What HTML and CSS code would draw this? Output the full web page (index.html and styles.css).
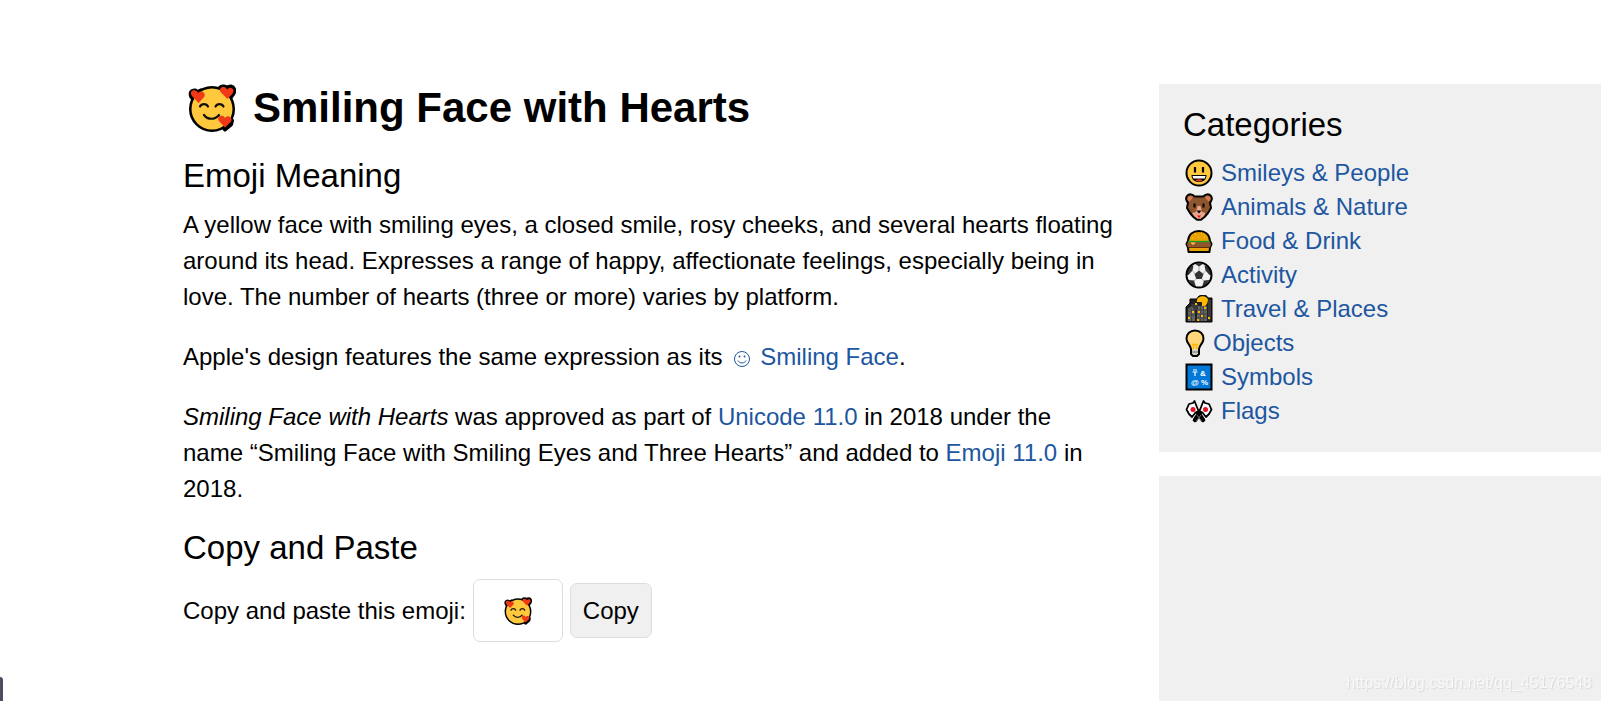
FILE: index.html
```html
<!doctype html>
<html lang="en">
<head>
  <meta charset="utf-8">
  <meta name="viewport" content="width=device-width">
  <title>Smiling Face with Hearts</title>
  <link rel="stylesheet" href="styles.css">
</head>
<body>
<svg class="sprite" aria-hidden="true">
  <symbol id="hearts-face" viewBox="0 0 48 48">
    <g fill="#000" stroke="#000" stroke-width="4" stroke-linejoin="round">
      <circle cx="24" cy="25" r="21"/>
      <path d="M10 19.500L3.500 13C1.500 9 3.500 6 7 6.500c1 .3 2 1.300 3 2 1-1.200 2-2 4-2.500"/>
      <path d="M40 17L32 8C30 4 33 2 36 2.500c1.500.3 2.500 1 3 1.500 1-1.200 2-1.500 4-1.500 3 .5 4 3.500 2.500 7z"/>
      <path d="M37 45.500l-5-6 12-3-1 4z"/>
    </g>
    <circle cx="24" cy="25" r="20.500" fill="#ffc83d"/>
    <g fill="#f03a17">
      <path d="M10.500 19l-6.500-7C1.500 8.500 4 5.500 7 6.500c1.500.3 2.700 1.300 3.300 2.500 1-1.400 2.500-1.800 4-1.300 2.700.8 3 3.800 1.700 5.500z"/>
      <path d="M39.500 15L33 8.500C30.500 5 33 2.500 36 3c1.500.3 2.700 1.300 3.300 2.500C40.300 4 42 3.500 43.300 4 46 4.800 46 7.500 44.500 9.500z"/>
      <path d="M37 43.500l-6-6.500c-2-3.300.5-5.700 3-5.200 1.500.3 2.500 1.200 3 2.300 1-1.500 2.500-2 4-1.600 3 .9 3 3.700 1.700 5.500z"/>
    </g>
    <path d="M12 22.500c1.500-3.300 6.500-3.300 8 0M27.500 22.500c1.500-3.300 6.500-3.300 8 0M16 31c3.500 5 11 5 15 0" fill="none" stroke="#111" stroke-width="2.200" stroke-linecap="round"/>
  </symbol>
</svg>

<div class="page">
  <main class="content">
    <h1><svg class="title-emoji" aria-hidden="true"><use href="#hearts-face"/></svg>Smiling Face with Hearts</h1>

    <h2>Emoji Meaning</h2>
    <p>A yellow face with smiling eyes, a closed smile, rosy cheeks, and several hearts floating around its head. Expresses a range of happy, affectionate feelings, especially being in love. The number of hearts (three or more) varies by platform.</p>
    <p>Apple's design features the same expression as its
      <a href="#"><svg class="inline-emoji" viewBox="0 0 18 18" aria-hidden="true"><circle cx="9" cy="9" r="7.500" fill="none" stroke="currentColor"/><path d="M5 10.500c1.500 3.300 6.500 3.300 8 0" fill="none" stroke="currentColor"/><circle cx="6.500" cy="6.500" r="1" fill="currentColor"/><circle cx="11.500" cy="6.500" r="1" fill="currentColor"/></svg>Smiling Face</a>.</p>
    <p><em>Smiling Face with Hearts</em> was approved as part of <a href="#">Unicode 11.0</a> in 2018 under the name “Smiling Face with Smiling Eyes and Three Hearts” and added to <a href="#">Emoji 11.0</a> in 2018.</p>

    <h2>Copy and Paste</h2>
    <form class="copy-form">
      <label for="emoji-copy">Copy and paste this emoji:</label>
      <span class="copy-field">
        <input id="emoji-copy" type="text" readonly>
        <svg aria-hidden="true"><use href="#hearts-face"/></svg>
      </span>
      <button type="button">Copy</button>
    </form>
  </main>

  <aside class="sidebar">
    <nav class="block">
      <h2>Categories</h2>
      <ul>
        <li><a href="#">
          <svg class="icon" viewBox="0 0 28 28" aria-hidden="true">
            <circle cx="14" cy="14" r="12.500" fill="#ffc83d" stroke="#000" stroke-width="2"/>
            <path d="M10 8v5.500M18 8v5.500" stroke="#000" stroke-width="2.200"/>
            <path d="M6.500 16h15c0 4.500-3 7-7.500 7s-7.500-2.500-7.500-7z" fill="#000"/>
            <path d="M7.500 17h13l-.8 2.500H8.300z" fill="#fff"/>
            <path d="M10.500 21.500c2-1.800 5-1.800 7 0-2 1.300-5 1.300-7 0z" fill="#f03a17"/>
          </svg>Smileys &amp; People</a></li>
        <li><a href="#">
          <svg class="icon" viewBox="0 0 28 28" aria-hidden="true">
            <path d="M2 3c2-2.500 6-2 7.500.5h9C20 1 24 .5 26 3c1.500 2 .8 5-1 6.500l1 5.500-3 5-3.500 4-3.500 2.700h-4L8.500 24 5 20l-3-5 1-5.500C1 8 .5 5 2 3z" fill="#8e562e" stroke="#000" stroke-width="2" stroke-linejoin="round"/>
            <path d="M3 4c2-2 4.500-1 5 .5L4.500 8.500C2.500 7.500 2 5.500 3 4zM25 4c-2-2-4.500-1-5 .5l3.500 4C25.500 7.500 26 5.500 25 4z" fill="#d67d50"/>
            <path d="M12.500 13h3l1.500 6 3.500 1-1.500 3-3.500 2.700h-3L9 23l-2-3 4-1z" fill="#e9a58c"/>
            <path d="M9.500 10.500v4M18.500 10.500v4" stroke="#000" stroke-width="2"/>
            <path d="M11.500 17.500h5L14 20.500z" fill="#000"/>
            <path d="M12 22.500h4L14 25z" fill="#e81224"/>
          </svg>Animals &amp; Nature</a></li>
        <li><a href="#">
          <svg class="icon" viewBox="0 0 28 28" aria-hidden="true">
            <path d="M3 14C3.500 7.500 8 4 14 4s10.500 3.500 11 10l1.500 3-1.500 3.500-.5 4.500h-21L3 20.500 1.500 17z" fill="#e8a200" stroke="#000" stroke-width="2" stroke-linejoin="round"/>
            <path d="M3 15h22l1 2-1 3.500H3l-1-3.500z" fill="#8e562e"/>
            <path d="M3 14.500h22" stroke="#16a020" stroke-width="1.300"/>
            <path d="M5 15.500h6l-3 2.500z" fill="#ffc83d"/>
            <path d="M4 20.500h20" stroke="#5f2d0b"/>
            <path d="M10 7h1M16 6h1M13 10h1M19 10h1M7 11h1" stroke="#ffd56d"/>
          </svg>Food &amp; Drink</a></li>
        <li><a href="#">
          <svg class="icon" viewBox="0 0 28 28" aria-hidden="true">
            <circle cx="14" cy="14" r="12.500" fill="#f2f2f2"/>
            <path d="M14 9.500l4.500 3.500-1.700 5h-5.600l-1.700-5zM9.500 2.500h9L14 5.500zM2 10l3-4.500 3.500-1-1 5L3.500 14H1.500zM26 10l-3-4.500-3.500-1 1 5 4 4.500h2zM3.500 19l5.500.5L11 26l-4-2zM24.500 19l-5.500.5L17 26l4-2z" fill="#333"/>
            <path d="M14 5v5M7.500 9.500l2.500 3.500M20.500 9.500L18 13M11.200 18L9 20M16.800 18l2.200 2" stroke="#aaa"/>
            <circle cx="14" cy="14" r="12.500" fill="none" stroke="#000" stroke-width="2"/>
          </svg>Activity</a></li>
        <li><a href="#">
          <svg class="icon" viewBox="0 0 28 28" aria-hidden="true">
            <path d="M1 27V12l4-4V4h7c1-5 10-5 11-1h4v24z" fill="#222" stroke="#000" stroke-width="1"/>
            <path d="M12 5c1-5 10-5 11 0-.5 3-1.500 5-3 6h-3V7h-5z" fill="#ffb900"/>
            <path d="M3 26V14l4-3 3 3v12zM12 26V11h10v15z" fill="#636363"/>
            <path d="M6 9h7v6H9zM23 5h3v20h-3z" fill="#393939"/>
            <path d="M3 16h7M3 20h7M12 15h10M12 19h10M12 23h10M6.500 13v13M15.500 11v15M18.500 11v15" stroke="#444"/>
            <path d="M10 8h2v2h-2zM7 16h2v2H7zM3 22h2v2H3zM13 16h2v2h-2zM19 12h2v2h-2zM16 20h2v2h-2zM23 22h2v2h-2zM12 24h2v2h-2z" fill="#ffb900"/>
          </svg>Travel &amp; Places</a></li>
        <li><a href="#">
          <svg class="icon icon--narrow" viewBox="0 0 20 28" aria-hidden="true">
            <path d="M10 1.500c5 0 8.500 3.500 8.500 8.200 0 4.300-4 6-4.500 10.300v5l-2 2H8l-2-2v-5C5.500 15.700 1.500 14 1.500 9.700 1.500 5 5 1.500 10 1.500z" fill="#ffd679" stroke="#000" stroke-width="2"/>
            <path d="M7 15.500h6M8.500 15.500V20M11.500 15.500V20" fill="none" stroke="#ffb900" stroke-width="1.500"/>
            <path d="M7 20.500h6v3.500l-2 2H9l-2-2z" fill="#ccc"/>
            <path d="M7 23h6" stroke="#777"/>
          </svg>Objects</a></li>
        <li><a href="#">
          <svg class="icon" viewBox="0 0 28 28" aria-hidden="true">
            <path d="M1.500 1.500h25v25h-25z" fill="#0078d7" stroke="#000" stroke-width="2"/>
            <path d="M8 7h4M7.500 9h5M10 9v4" stroke="#fff" stroke-width="1.200"/>
            <text class="icon-text" x="15" y="13">&amp;</text>
            <text class="icon-text" x="6" y="22">@</text>
            <text class="icon-text" x="16" y="22">%</text>
          </svg>Symbols</a></li>
        <li><a href="#">
          <svg class="icon" viewBox="0 0 28 28" aria-hidden="true">
            <path d="M12 14l6 9M16 14l-6 9" stroke="#000" stroke-width="4.500" stroke-linecap="round"/>
            <path d="M9.500 4l4 10-3 1.500-3.500 4.500-3-3-2.500-4.500L4 7l4-1zM18.500 4l-4 10 3 1.500 3.500 4.500 3-3 2.500-4.500L24 7l-4-1z" fill="#fff" stroke="#000" stroke-width="1.800" stroke-linejoin="round"/>
            <circle cx="8" cy="12.500" r="2.500" fill="#e81224"/>
            <circle cx="20.500" cy="12.500" r="2.500" fill="#e81224"/>
            <path d="M12 18l4.500 6M16 18l-4.500 6" stroke="#666"/>
          </svg>Flags</a></li>
      </ul>
    </nav>
    <div class="block block--ad"></div>
  </aside>
</div>

<div class="side-tab"></div>
<div class="watermark">https://blog.csdn.net/qq_45176548</div>
</body>
</html>
```

FILE: styles.css
```css
html {
  box-sizing: border-box;
}

*, *:before, *:after {
  box-sizing: inherit;
}

body, h1, h2, p, ul {
  margin: 0;
  padding: 0;
}

ul {
  list-style: none;
}

body {
  font-family: "Liberation Sans", Arial, sans-serif;
  font-size: 24px;
  line-height: 36px;
  color: #000;
  background: #fff;
}

a {
  color: #2056a0;
  text-decoration: none;
}

.sprite {
  position: absolute;
  width: 0;
  height: 0;
}

.page {
  display: grid;
  grid-template-columns: minmax(0, 1fr) 442px;
  column-gap: 44px;
  min-height: 100vh;
  padding-left: 183px;
}

.content {
  padding-top: 83px;
}

h1 {
  display: flex;
  align-items: center;
  margin-bottom: 24px;
  font-size: 42px;
  line-height: 50px;
}

h2 {
  margin: 22px 0 12px;
  font-size: 33px;
  font-weight: normal;
  line-height: 38px;
}

p + p {
  margin-top: 24px;
}

.title-emoji {
  width: 48px;
  height: 48px;
  margin: 0 17px 0 5px;
}

.inline-emoji {
  width: 18px;
  height: 18px;
  margin: 0 9px 0 4px;
  vertical-align: -3px;
}

.copy-form {
  display: flex;
  align-items: center;
  gap: 7px;
}

.copy-field {
  position: relative;
  display: flex;
}

.copy-field input {
  width: 90px;
  height: 63px;
  border: 1px solid #ddd;
  border-radius: 7px;
  background: #fff;
}

.copy-field svg {
  position: absolute;
  top: 18px;
  left: 31px;
  width: 28px;
  height: 28px;
  pointer-events: none;
}

.copy-form button {
  height: 55px;
  padding: 0 12px;
  border: 1px solid #ddd;
  border-radius: 7px;
  background: #f0f0f0;
  color: #000;
  font: inherit;
}

.sidebar {
  display: flex;
  flex-direction: column;
  gap: 24px;
  padding-top: 84px;
}

.block {
  padding: 22px 24px 24px;
  background: #f0f0f0;
}

.block h2 {
  margin-top: 0;
}

.block a {
  display: flex;
  align-items: center;
  line-height: 34px;
}

.block--ad {
  flex: 1;
}

.icon {
  width: 28px;
  height: 28px;
  margin: 0 8px 0 2px;
}

.icon--narrow {
  width: 20px;
}

.icon-text {
  font-size: 8px;
  font-weight: bold;
  fill: #fff;
}

.side-tab {
  position: fixed;
  bottom: 0;
  left: 0;
  width: 3px;
  height: 24px;
  border-top-right-radius: 3px;
  background: #4c4e60;
}

.watermark {
  position: fixed;
  right: 9px;
  bottom: 8px;
  font-size: 16px;
  line-height: 20px;
  color: #f8f8f8;
  text-shadow: 1px 1px 1px #d8d8d8;
}
```
